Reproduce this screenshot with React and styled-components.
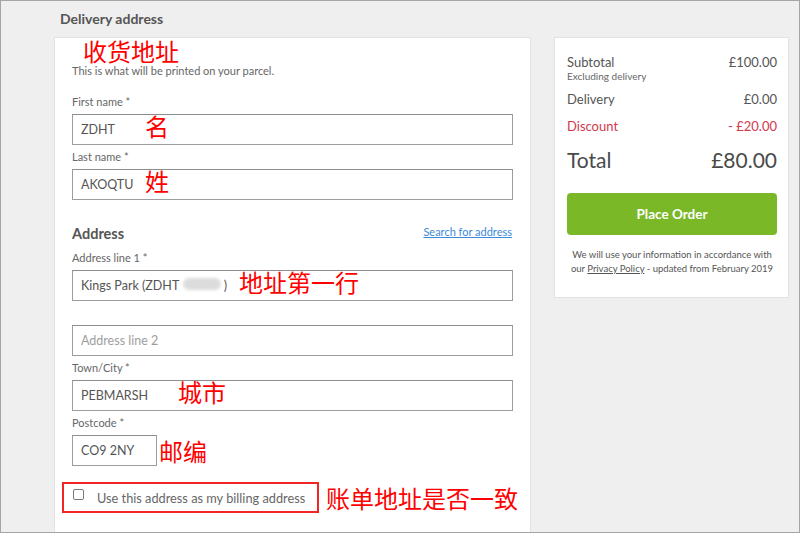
import React from 'react';
import styled, { createGlobalStyle } from 'styled-components';

const Global = createGlobalStyle`
  html, body { margin: 0; padding: 0; }
  body { font-family: Lato, "Noto Sans CJK SC", sans-serif; background: #efefef; }
  *, *::before, *::after { box-sizing: border-box; }
`;

const Frame = styled.div`
  width: 800px;
  height: 533px;
  overflow: hidden;
  border: 1px solid #a5a5a5;
  background: #efefef;
  display: grid;
  grid-template-columns: 477px 235px;
  grid-template-rows: auto 1fr;
  column-gap: 23px;
  padding: 8px 0 0 53px;
  align-items: start;
`;

const PageTitle = styled.h2`
  grid-column: 1;
  grid-row: 1;
  margin: 0 0 8px;
  padding-left: 6px;
  font-size: 14px;
  line-height: 20px;
  font-weight: 700;
  color: #555;
`;

const Card = styled.section`
  background: #fff;
  border: 1px solid #e2e2e2;
`;

const FormCard = styled(Card)`
  grid-column: 1;
  grid-row: 2;
  padding: 0 17px 40px;
  min-height: 520px;
`;

const SummaryCard = styled(Card)`
  grid-column: 2;
  grid-row: 2;
  padding: 16px 11px 21px 12px;
`;

const NoteHeading = styled.div`
  margin-left: 11px;
  color: #ff0000;
  font-family: "Noto Sans CJK SC", sans-serif;
  font-size: 24px;
  line-height: 26px;
`;

const Intro = styled.p`
  margin: 0 0 17px;
  font-size: 11px;
  line-height: 14px;
  color: #666;
`;

const Field = styled.div`
  position: relative;
  margin-bottom: 5px;
  width: ${(p) => p.$width || '100%'};
`;

const Label = styled.label`
  display: block;
  height: 14px;
  margin-bottom: 5px;
  font-size: 11px;
  line-height: 14px;
  color: #666;
`;

const TextInput = styled.input`
  display: block;
  width: 100%;
  height: 31px;
  margin: 0;
  border: 1px solid #9d9d9d;
  border-top-color: #8e8e8e;
  border-radius: 0;
  padding: 0 8px;
  font-family: Lato, sans-serif;
  font-size: 12.5px;
  color: #555;
  background: #fff;
  outline: none;
  &::placeholder { color: #9e9e9e; }
`;

const Note = styled.span`
  position: absolute;
  left: ${(p) => p.$left}px;
  top: 18px;
  color: #ff0000;
  font-family: "Noto Sans CJK SC", sans-serif;
  font-size: 24px;
  line-height: 26px;
  pointer-events: none;
  white-space: nowrap;
`;

const InlineNote = styled.span`
  color: #ff0000;
  font-family: "Noto Sans CJK SC", sans-serif;
  font-size: 24px;
  line-height: 26px;
  white-space: nowrap;
`;

const Redaction = styled.span`
  position: absolute;
  left: 111px;
  top: 27px;
  width: 38px;
  height: 12px;
  border-radius: 6px;
  background: #dcdcdc;
  filter: blur(1.5px);
  pointer-events: none;
`;

const SectionHead = styled.div`
  display: flex;
  justify-content: space-between;
  align-items: flex-start;
  margin: 25px 0 8px;
`;

const SectionTitle = styled.h3`
  margin: 0;
  font-size: 14.5px;
  line-height: 18px;
  font-weight: 700;
  color: #555;
`;

const TextLink = styled.a`
  font-size: 11px;
  line-height: 14px;
  margin-right: 1px;
  color: #3c8ad8;
  text-decoration: underline;
  cursor: pointer;
`;

const PostRow = styled.div`
  display: flex;
  align-items: center;
  gap: 2px;
`;

const BillingRow = styled.div`
  display: flex;
  align-items: center;
  gap: 7px;
  margin: 16px 0 0 -10px;
`;

const BillingBox = styled.label`
  display: flex;
  flex: none;
  align-items: center;
  gap: 13px;
  width: 257px;
  height: 31px;
  padding-left: 9px;
  border: 2px solid #f02626;
  font-size: 12.75px;
  color: #666;
  cursor: pointer;
`;

const Check = styled.input`
  appearance: none;
  flex: none;
  width: 11px;
  height: 11px;
  margin: -7px 0 0;
  border: 1px solid #7a7a7a;
  border-radius: 2px;
  background: #fff;
`;

const Row = styled.div`
  display: flex;
  justify-content: space-between;
  align-items: flex-start;
  margin-top: ${(p) => p.$gap || 0}px;
  font-size: 13px;
  line-height: 16px;
  color: ${(p) => (p.$discount ? '#d2384e' : '#555')};
`;

const Sub = styled.div`
  font-size: 10px;
  line-height: 12px;
  color: #666;
`;

const TotalRow = styled.div`
  display: flex;
  justify-content: space-between;
  margin-top: 13px;
  font-size: 21px;
  line-height: 26px;
  color: #4a4a4a;
`;

const OrderButton = styled.button`
  display: block;
  width: 100%;
  height: 42px;
  margin-top: 20px;
  border: 0;
  border-radius: 4px;
  background: #7bb828;
  color: #fff;
  font-family: Lato, sans-serif;
  font-size: 13.5px;
  font-weight: 700;
  cursor: pointer;
`;

const Footnote = styled.p`
  margin: 13px 0 0;
  font-size: 9.5px;
  line-height: 14px;
  text-align: center;
  color: #555;
`;

const FootLink = styled.a`
  color: #555;
  text-decoration: underline;
`;

function TextField({ label, value, placeholder, note, noteLeft, children }) {
  return (
    <Field>
      <Label>{label}</Label>
      <TextInput readOnly value={value || ''} placeholder={placeholder} />
      {children}
      {note && <Note $left={noteLeft}>{note}</Note>}
    </Field>
  );
}

export default function App() {
  return (
    <>
      <Global />
      <Frame>
        <PageTitle>Delivery address</PageTitle>
        <FormCard>
          <NoteHeading>收货地址</NoteHeading>
          <Intro>This is what will be printed on your parcel.</Intro>
          <TextField label="First name *" value="ZDHT" note="名" noteLeft={73} />
          <TextField label="Last name *" value="AKOQTU" note="姓" noteLeft={73} />
          <SectionHead>
            <SectionTitle>Address</SectionTitle>
            <TextLink>Search for address</TextLink>
          </SectionHead>
          <TextField
            label="Address line 1 *"
            value={'Kings Park (ZDHT              )'}
            note="地址第一行"
            noteLeft={167}
          >
            <Redaction />
          </TextField>
          <TextField label={'\u00a0'} placeholder="Address line 2" />
          <TextField label="Town/City *" value="PEBMARSH" note="城市" noteLeft={106} />
          <Field>
            <Label>Postcode *</Label>
            <PostRow>
              <Field $width="85px" style={{ marginBottom: 0 }}>
                <TextInput readOnly value="CO9 2NY" />
              </Field>
              <InlineNote>邮编</InlineNote>
            </PostRow>
          </Field>
          <BillingRow>
            <BillingBox>
              <Check type="checkbox" />
              Use this address as my billing address
            </BillingBox>
            <InlineNote>账单地址是否一致</InlineNote>
          </BillingRow>
        </FormCard>
        <SummaryCard>
          <Row>
            <div>
              Subtotal
              <Sub>Excluding delivery</Sub>
            </div>
            <span>£100.00</span>
          </Row>
          <Row $gap={9}>
            <span>Delivery</span>
            <span>£0.00</span>
          </Row>
          <Row $gap={11} $discount>
            <span>Discount</span>
            <span>- £20.00</span>
          </Row>
          <TotalRow>
            <span>Total</span>
            <span>£80.00</span>
          </TotalRow>
          <OrderButton>Place Order</OrderButton>
          <Footnote>
            We will use your information in accordance with our <FootLink>Privacy Policy</FootLink> - updated from February 2019
          </Footnote>
        </SummaryCard>
      </Frame>
    </>
  );
}
